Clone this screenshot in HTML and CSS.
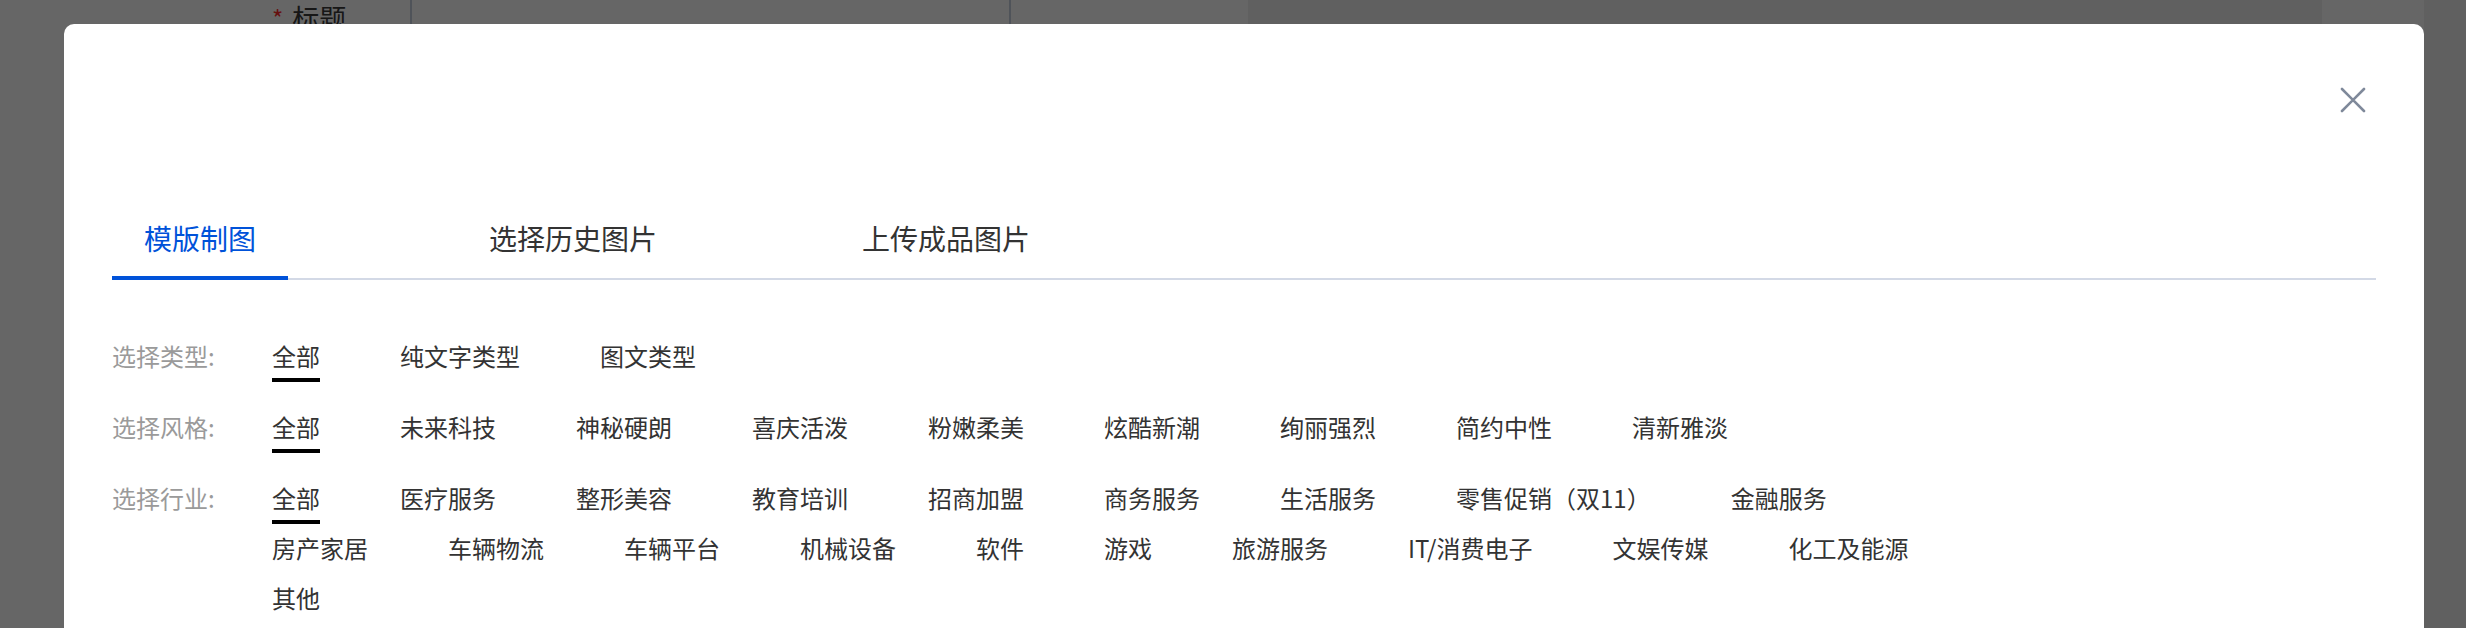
FILE: index.html
```html
<!DOCTYPE html>
<html lang="zh-CN">
<head>
<meta charset="utf-8">
<title>模版制图</title>
<link rel="stylesheet" href="styles.css">
</head>
<body>
<div class="page">
  <div class="page-row">
    <div class="cell cell-label"><span class="req">*</span><span class="label-text">标题</span></div>
    <div class="cell cell-input"></div>
    <div class="cell cell-a"></div>
    <div class="cell cell-b"></div>
    <div class="cell cell-c"></div>
    <div class="cell cell-d"></div>
  </div>
</div>
<div class="mask"></div>
<div class="modal">
  <div class="modal-header">
    <button class="close" aria-label="关闭">
      <svg width="26" height="26" viewBox="0 0 26 26"><path d="M2 2L24 24M24 2L2 24" stroke="#7f899a" stroke-width="2.6" stroke-linecap="round" fill="none"/></svg>
    </button>
  </div>
  <div class="tabs">
    <div class="tab active">模版制图</div>
    <div class="tab">选择历史图片</div>
    <div class="tab">上传成品图片</div>
  </div>
  <div class="filters">
    <div class="filter-row">
      <div class="filter-label">选择类型:</div>
      <div class="filter-items">
        <span class="item active">全部</span>
        <span class="item">纯文字类型</span>
        <span class="item">图文类型</span>
      </div>
    </div>
    <div class="filter-row">
      <div class="filter-label">选择风格:</div>
      <div class="filter-items">
        <span class="item active">全部</span>
        <span class="item">未来科技</span>
        <span class="item">神秘硬朗</span>
        <span class="item">喜庆活泼</span>
        <span class="item">粉嫩柔美</span>
        <span class="item">炫酷新潮</span>
        <span class="item">绚丽强烈</span>
        <span class="item">简约中性</span>
        <span class="item">清新雅淡</span>
      </div>
    </div>
    <div class="filter-row">
      <div class="filter-label">选择行业:</div>
      <div class="filter-items">
        <span class="item active">全部</span>
        <span class="item">医疗服务</span>
        <span class="item">整形美容</span>
        <span class="item">教育培训</span>
        <span class="item">招商加盟</span>
        <span class="item">商务服务</span>
        <span class="item">生活服务</span>
        <span class="item">零售促销（双11）</span>
        <span class="item">金融服务</span>
        <span class="item">房产家居</span>
        <span class="item">车辆物流</span>
        <span class="item">车辆平台</span>
        <span class="item">机械设备</span>
        <span class="item">软件</span>
        <span class="item">游戏</span>
        <span class="item">旅游服务</span>
        <span class="item">IT/消费电子</span>
        <span class="item">文娱传媒</span>
        <span class="item">化工及能源</span>
        <span class="item">其他</span>
      </div>
    </div>
  </div>
</div>
</body>
</html>
```

FILE: styles.css
```css
html, body {
  margin: 0;
  padding: 0;
  width: 2466px;
  height: 628px;
  overflow: hidden;
  font-family: "Noto Sans CJK SC", "Noto Sans", sans-serif;
  background: #ffffff;
}

.page {
  width: 2466px;
  height: 628px;
}

.page-row {
  display: flex;
  height: 628px;
}

.cell {
  box-sizing: border-box;
  height: 100%;
  flex: none;
}

.cell-label {
  width: 412px;
  padding-left: 272px;
  padding-top: 0;
  border-right: 2px solid #c5cfde;
  font-size: 27px;
  line-height: 36px;
  color: #3a3a3a;
  display: flex;
  align-items: flex-start;
  gap: 9px;
}

.req {
  color: #ff2a2a;
  font-size: 24px;
}

.cell-input {
  width: 599px;
  border-right: 2px solid #c5cfde;
}

.cell-a {
  width: 237px;
}

.cell-b {
  width: 1074px;
  background: #f0f0f0;
}

.cell-c {
  width: 102px;
}

.cell-d {
  flex: 1;
  background: #f0f0f0;
}

.mask {
  position: fixed;
  inset: 0;
  background: rgba(0, 0, 0, 0.6);
}

.modal {
  position: absolute;
  top: 24px;
  left: 64px;
  width: 2360px;
  height: 720px;
  box-sizing: border-box;
  padding: 0 48px;
  background: #ffffff;
  border-radius: 10px;
}

.modal-header {
  height: 194px;
  box-sizing: border-box;
  padding-top: 53px;
  display: flex;
  justify-content: flex-end;
  align-items: flex-start;
}

.close {
  width: 46px;
  height: 46px;
  padding: 0;
  border: 0;
  background: none;
  display: flex;
  align-items: center;
  justify-content: center;
}

.tabs {
  display: flex;
  gap: 197px;
  border-bottom: 2px solid #d3d9e6;
}

.tab {
  width: 176px;
  flex: none;
  text-align: center;
  font-size: 28px;
  line-height: 40px;
  padding-bottom: 18px;
  border-bottom: 4px solid transparent;
  margin-bottom: -2px;
  color: #333333;
  white-space: nowrap;
}

.tab.active {
  color: #0052d9;
  border-bottom-color: #0052d9;
}

.filters {
  margin-top: 60px;
}

.filter-row {
  display: flex;
  margin-bottom: 29px;
}

.filter-label {
  width: 160px;
  flex: none;
  font-size: 24px;
  line-height: 32px;
  color: #9a9a9a;
}

.filter-items {
  display: flex;
  flex-wrap: wrap;
  column-gap: 80px;
  row-gap: 8px;
  max-width: 1680px;
}

.item {
  display: flex;
  flex-direction: column;
  font-size: 24px;
  line-height: 32px;
  color: #333333;
  white-space: nowrap;
}

.item::after {
  content: "";
  height: 4px;
  margin-top: 6px;
  background: transparent;
}

.item.active::after {
  background: #000000;
}
```
